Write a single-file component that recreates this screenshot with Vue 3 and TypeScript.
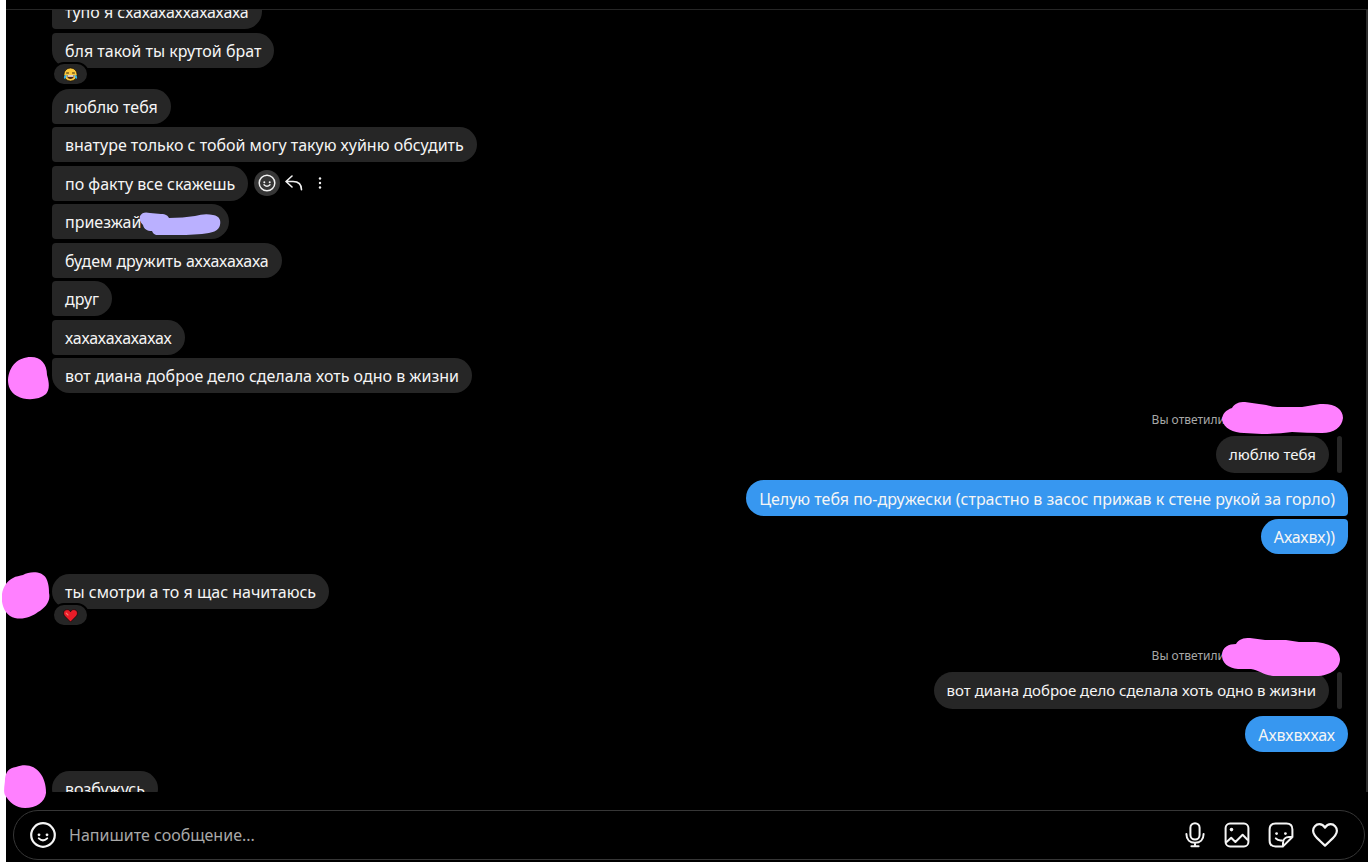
<script setup lang="ts">
type Shape = 'first' | 'middle' | 'last' | 'single'

interface Message {
  id: number
  text: string
  shape: Shape
  actions?: boolean
  hiddenName?: boolean
  avatar?: string
}

const opening: Message[] = [
  { id: 1, text: 'тупо я схахахаххахахаха', shape: 'middle' },
  { id: 2, text: 'бля такой ты крутой брат', shape: 'last' },
]

const friendly: Message[] = [
  { id: 3, text: 'люблю тебя', shape: 'first' },
  { id: 4, text: 'внатуре только с тобой могу такую хуйню обсудить', shape: 'middle' },
  { id: 5, text: 'по факту все скажешь', shape: 'middle', actions: true },
  { id: 6, text: 'приезжай', shape: 'middle', hiddenName: true },
  { id: 7, text: 'будем дружить аххахахаха', shape: 'middle' },
  { id: 8, text: 'друг', shape: 'middle' },
  { id: 9, text: 'хахахахахахах', shape: 'middle' },
  {
    id: 10,
    text: 'вот диана доброе дело сделала хоть одно в жизни',
    shape: 'last',
    avatar: 'M23 0C33 0 39 7 39 18C42 28 41 33 38 37C31 43 18 44 9 39C2 35 0 29 0 23C1 9 10 0 23 0Z',
  },
]
</script>

<template>
  <div class="chat">
    <header class="topbar"></header>

    <main class="thread">
      <section class="group opening">
        <div v-for="m in opening" :key="m.id" class="row">
          <div class="bubble" :class="m.shape">{{ m.text }}</div>
          <button v-if="m.id === 2" class="reaction" type="button" aria-label="Реакция: смех">
            <svg width="15" height="15" viewBox="0 0 15 15">
              <circle cx="7.5" cy="7.5" r="6.6" fill="#fbc93c" stroke="#1a1208" stroke-width="0.8" />
              <path d="M3.2 6H5.9M9.1 6H11.8" fill="none" stroke="#33220c" stroke-width="1" />
              <path d="M3.8 8H11.2Q10.8 12 7.5 12Q4.2 12 3.8 8Z" fill="#4a2412" />
              <path d="M4.4 8.2H10.6V9.7H4.4Z" fill="#fff" />
              <path d="M3.4 7.6Q.4 8.8 1 11.6Q3.8 12.4 3.4 7.6ZM11.6 7.6Q14.6 8.8 14 11.6Q11.2 12.4 11.6 7.6Z" fill="#35b5e8" />
            </svg>
          </button>
        </div>
      </section>

      <section class="group friendly">
        <div v-for="m in friendly" :key="m.id" class="row">
          <svg v-if="m.avatar" class="avatar mid" width="42" height="43" viewBox="0 0 42 43">
            <path :d="m.avatar" fill="#ff80ff" />
          </svg>
          <div class="bubble" :class="[m.shape, { named: m.hiddenName }]">
            {{ m.text }}
            <svg v-if="m.hiddenName" class="name-mark" width="82" height="24" viewBox="0 0 82 24">
              <path d="M1 4C3 0 7 0 11 1L22 2C27 2 29 4 30 6Q44 6 56 4Q66 1 74 3C81 4 82 9 81 13C80 19 73 21 63 22L47 23H19C15 23 14 21 13 19C8 19 5 17 4 13C1 10 0 7 1 4Z" fill="#bab0ff" />
            </svg>
          </div>
          <div v-if="m.actions" class="actions">
            <button type="button" class="act round" aria-label="Отреагировать">
              <svg width="18" height="18" viewBox="0 0 18 18" fill="none" stroke="#f2f2f2">
                <circle cx="9" cy="9" r="7.8" stroke-width="1.5" />
                <path d="M6 10.8Q9 13.8 12 10.8" stroke-width="1.4" stroke-linecap="round" />
                <circle cx="6.3" cy="8.2" r="1" fill="#f2f2f2" stroke="none" />
                <circle cx="11.7" cy="8.2" r="1" fill="#f2f2f2" stroke="none" />
              </svg>
            </button>
            <button type="button" class="act" aria-label="Ответить">
              <svg width="18" height="16" viewBox="0 0 18 16" fill="none" stroke="#f2f2f2" stroke-width="1.6" stroke-linecap="round" stroke-linejoin="round">
                <path d="M7 1L1 6.5L7 12M1.2 6.5H8C13.5 6.5 16.5 9 16.5 14.8" />
              </svg>
            </button>
            <button type="button" class="act" aria-label="Ещё">
              <svg width="4" height="12" viewBox="0 0 4 12" fill="#f2f2f2">
                <circle cx="2" cy="1.5" r="1.2" />
                <circle cx="2" cy="6" r="1.2" />
                <circle cx="2" cy="10.5" r="1.2" />
              </svg>
            </button>
          </div>
        </div>
      </section>

      <section class="own">
        <div class="reply-label">
          Вы ответили
          <svg class="reply-mark" width="121" height="33" viewBox="0 0 121 33">
            <path d="M10 6C13 1 17 0 23 0L37 2C46 3 50 5 58 5H80L98 2C113 1 121 7 121 16C120 25 112 31 100 31Q85 31 70 30Q54 32 40 32L22 31C11 31 2 26 0 18C0 12 4 8 10 6Z" fill="#ff80ff" />
          </svg>
        </div>
        <div class="quote"><div class="quoted">люблю тебя</div></div>
        <div class="bubble mine top">Целую тебя по-дружески (страстно в засос прижав к стене рукой за горло)</div>
        <div class="bubble mine bottom">Ахахвх))</div>
      </section>

      <section class="group warning">
        <div class="row">
          <svg class="avatar high" width="48" height="47" viewBox="0 0 48 47">
            <path d="M21 3C28-1 40-1 44 6C46 10 47 14 47 21C49 29 43 36 36 40C28 46 17 49 8 44C1 39-1 30 0 22C1 15 5 9 11 6C14 4 18 4 21 3Z" fill="#ff80ff" />
          </svg>
          <div class="bubble single">ты смотри а то я щас начитаюсь</div>
          <button class="reaction" type="button" aria-label="Реакция: сердце">
            <svg width="15" height="15" viewBox="0 0 15 15">
              <path d="M7.5 14L1.6 8C-.2 5.8.5 2.8 2.6 1.9C4.7 1.1 6.5 1.9 7.5 3.8C8.5 1.9 10.3 1.1 12.4 1.9C14.5 2.8 15.2 5.8 13.4 8Z" fill="#e91c28" stroke="#14090a" stroke-width="0.8" />
              <path d="M3.2 5.2L5 7" stroke="#f77a6e" stroke-width="1.1" stroke-linecap="round" />
            </svg>
          </button>
        </div>
      </section>

      <section class="own second">
        <div class="reply-label">
          Вы ответили
          <svg class="reply-mark tall" width="118" height="38" viewBox="0 0 118 38">
            <path d="M14 6C17 1 21 0 28 0L43 2H64L77 4H90C107 4 118 11 118 21C118 30 109 38 94 38H51C42 37 36 32 29 31H16C6 30 0 25 0 17C0 9 7 6 14 6Z" fill="#ff80ff" />
          </svg>
        </div>
        <div class="quote"><div class="quoted">вот диана доброе дело сделала хоть одно в жизни</div></div>
        <div class="bubble mine">Ахвхвххах</div>
      </section>

      <section class="group closing">
        <div class="row">
          <svg class="avatar end" width="43" height="43" viewBox="0 0 43 43">
            <path d="M12 2C22-2 31 1 36 8C40 13 42 20 42 28C41 37 32 43 21 43C12 43 5 37 1 30C-1 26 1 19 1 14C2 6 5 3 12 2Z" fill="#ff80ff" />
          </svg>
          <div class="cut"><div class="bubble single">возбужусь</div></div>
        </div>
      </section>
      <div class="scrollbar"></div>
    </main>

    <form class="composer" @submit.prevent>
      <button type="button" aria-label="Выбрать смайлик">
        <svg width="26" height="26" viewBox="0 0 26 26" fill="none" stroke="#f5f5f5">
          <circle cx="13" cy="13" r="11.8" stroke-width="2.2" />
          <path d="M8.8 16.4Q13 20.4 17.2 16.4" stroke-width="2" stroke-linecap="round" />
          <circle cx="9" cy="12.8" r="1.4" fill="#f5f5f5" stroke="none" />
          <circle cx="17" cy="12.8" r="1.4" fill="#f5f5f5" stroke="none" />
        </svg>
      </button>
      <input type="text" placeholder="Напишите сообщение..." aria-label="Напишите сообщение" />
      <div class="tools">
        <button type="button" aria-label="Голосовое сообщение">
          <svg width="22" height="26" viewBox="0 0 22 26" fill="none" stroke="#f5f5f5" stroke-width="2" stroke-linecap="round">
            <rect x="6.4" y="1.2" width="9.2" height="16.4" rx="4.6" />
            <path d="M2.4 12C2.4 17.6 6 20.8 11 20.8S19.6 17.6 19.6 12M11 20.8V24M7.4 24.2H14.6" />
          </svg>
        </button>
        <button type="button" aria-label="Добавить фото">
          <svg width="26" height="26" viewBox="0 0 26 26" fill="none" stroke="#f5f5f5" stroke-width="2" stroke-linejoin="round">
            <rect x="1.6" y="1.6" width="22.8" height="22.8" rx="4.5" />
            <path d="M2 20.5L7.2 15.8L11.4 20L18.6 12.8L24 18.2" />
            <circle cx="7.5" cy="7.6" r="1.8" fill="#f5f5f5" stroke="none" />
          </svg>
        </button>
        <button type="button" aria-label="Стикеры">
          <svg width="26" height="26" viewBox="0 0 26 26" fill="none" stroke="#f5f5f5" stroke-width="2" stroke-linecap="round" stroke-linejoin="round">
            <path d="M15 24.4H7.6C3.8 24.4 1.6 22.2 1.6 18.4V7.6C1.6 3.8 3.8 1.6 7.6 1.6H18.4C22.2 1.6 24.4 3.8 24.4 7.6V15ZM15 24.4V21C15 17.4 17.4 15 21 15H24.4" />
            <path d="M7.8 16.4Q9.8 18.8 14 18.4" />
            <circle cx="8.6" cy="11.6" r="1.4" fill="#f5f5f5" stroke="none" />
            <circle cx="17.4" cy="11.6" r="1.4" fill="#f5f5f5" stroke="none" />
          </svg>
        </button>
        <button type="button" aria-label="Нравится">
          <svg width="26" height="26" viewBox="0 0 26 26" fill="none" stroke="#f5f5f5" stroke-width="2.2" stroke-linejoin="round">
            <path d="M13 5.7C11.5 3.3 9.5 2.2 7.3 2.2C3.8 2.2 1.1 5.2 1.1 8.7C1.1 12.8 4.4 15.7 7.8 18.7L13 23.6L18.2 18.7C21.6 15.7 24.9 12.8 24.9 8.7C24.9 5.2 22.2 2.2 18.7 2.2C16.5 2.2 14.5 3.3 13 5.7Z" />
          </svg>
        </button>
      </div>
    </form>
  </div>
</template>

<style>
body {
  margin: 0;
  background: #000;
}
</style>

<style scoped>
.chat {
  box-sizing: border-box;
  min-height: 100vh;
  display: flex;
  flex-direction: column;
  background: linear-gradient(90deg, #fff 6px, #000 6px);
  color: #f5f5f5;
  font-family: "Noto Sans", "Open Sans", sans-serif;
  font-size: 16px;
  line-height: 21px;
}
button {
  display: flex;
  align-items: center;
  justify-content: center;
  padding: 0;
  border: 0;
  background: none;
}
svg {
  display: block;
}
.topbar {
  height: 9px;
  margin-left: 6px;
  border-bottom: 1px solid #262626;
}
.thread {
  position: relative;
  flex: 1;
  overflow: hidden;
  padding: 0 20px 18px 0;
}
.group {
  display: flex;
  flex-direction: column;
  padding-left: 52px;
}
.opening {
  margin-top: -16px;
  gap: 4px;
}
.friendly {
  min-height: 304px;
  margin-top: 21px;
  justify-content: space-between;
}
.warning {
  margin-top: 20px;
}
.closing {
  margin-top: 19px;
}
.row {
  position: relative;
  display: flex;
  align-items: center;
}
.bubble {
  box-sizing: border-box;
  padding: 8px 13px 6px;
  border-radius: 18px;
  background: #262626;
  white-space: nowrap;
}
.middle {
  border-radius: 4px 18px 18px 4px;
}
.first {
  border-radius: 18px 18px 18px 4px;
}
.last {
  border-radius: 4px 18px 18px 18px;
}
.named {
  position: relative;
  padding-right: 88px;
}
.name-mark {
  position: absolute;
  right: 8px;
  top: 8px;
}
.avatar {
  position: absolute;
}
.mid {
  left: -44px;
  top: -1px;
}
.high {
  left: -50px;
  top: -2px;
}
.end {
  left: -48px;
  top: -6px;
}
.reaction {
  position: absolute;
  left: 0;
  top: 29px;
  box-sizing: content-box;
  width: 33px;
  height: 20px;
  border: 2px solid #000;
  border-radius: 12px;
  background: #262626;
}
.actions {
  display: flex;
  align-items: center;
  gap: 5px;
  margin-left: 6px;
}
.act {
  min-width: 18px;
  height: 26px;
}
.act:last-child {
  min-width: 24px;
}
.round {
  width: 26px;
  border-radius: 50%;
  background: #363636;
}
.own {
  display: flex;
  flex-direction: column;
  align-items: flex-end;
  margin-top: 18px;
}
.second {
  margin-top: 38px;
}
.reply-label {
  position: relative;
  padding: 0 123px 7px 0;
  color: #a8a8a8;
  font-size: 12px;
  line-height: 18px;
}
.reply-mark {
  position: absolute;
  right: 5px;
  top: -9px;
}
.tall {
  right: 8px;
}
.quote {
  display: flex;
  gap: 8px;
  padding-right: 6px;
  margin-bottom: 7px;
  font-size: 15px;
}
.quote::after {
  content: "";
  width: 5px;
  border-radius: 3px;
  background: #262626;
}
.quoted {
  padding: 8px 13px;
  border-radius: 19px;
  background: #262626;
  white-space: nowrap;
}
.mine {
  padding: 9px 13px 6px;
  background: #3797f0;
}
.top {
  border-bottom-right-radius: 4px;
  margin-bottom: 3px;
}
.bottom {
  border-top-right-radius: 4px;
  padding: 8px 13px 6px;
}
.cut {
  height: 21px;
  overflow: hidden;
}
.scrollbar {
  position: absolute;
  top: 0;
  right: 0;
  bottom: 18px;
  width: 2px;
  background: #2c2c2c;
}
.composer {
  box-sizing: border-box;
  display: flex;
  align-items: center;
  gap: 13px;
  height: 50px;
  margin: 0 3px 2px 13px;
  padding: 0 26px 0 16px;
  border: 1px solid #363636;
  border-radius: 25px;
}
.composer input {
  flex: 1;
  min-width: 0;
  padding: 0;
  border: 0;
  outline: 0;
  background: transparent;
  color: #f5f5f5;
  font: inherit;
}
.composer input::placeholder {
  color: #a8a8a8;
  opacity: 1;
}
.tools {
  display: flex;
  gap: 18px;
}
</style>
